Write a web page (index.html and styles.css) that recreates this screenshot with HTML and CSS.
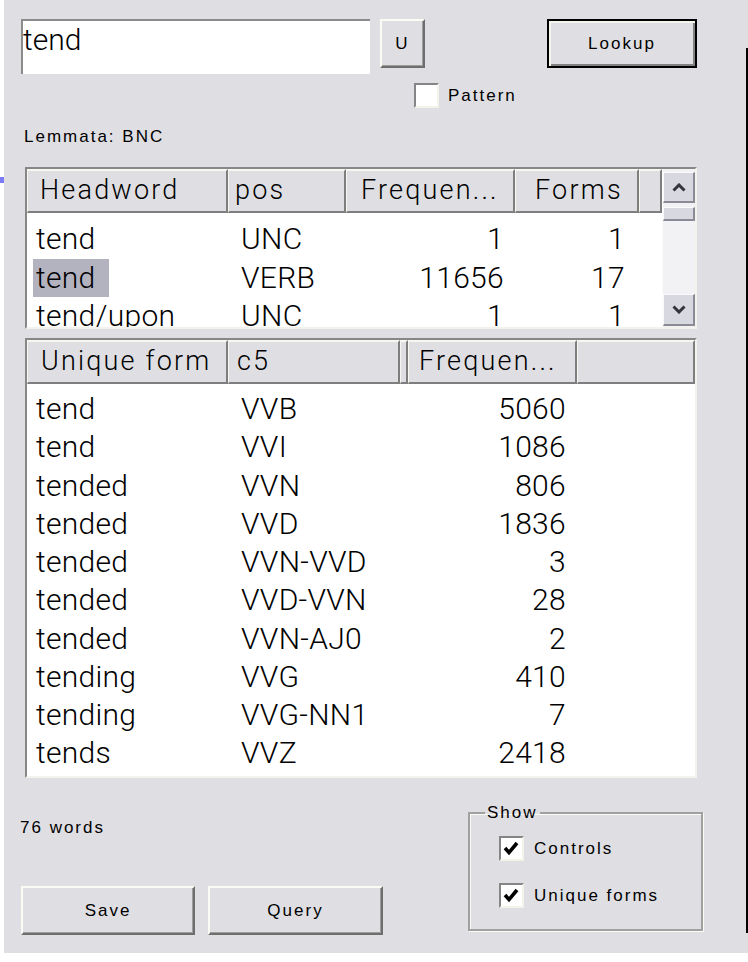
FILE: index.html
```html
<!DOCTYPE html>
<html>
<head>
<meta charset="utf-8">
<link rel="stylesheet" href="styles.css">
</head>
<body>
<div class="page">
  <div class="gutter"><div class="marker"></div></div>
  <div class="frame">
    <div class="main">
      <div class="toprow">
        <div class="textbox">tend</div>
        <div class="btn btn-u ui">U</div>
        <div class="btn btn-default btn-lookup ui">Lookup</div>
      </div>
      <div class="patternrow">
        <span class="checkbox"></span><span class="cblabel ui">Pattern</span>
      </div>
      <div class="lemmata ui">Lemmata: BNC</div>

      <div class="list list-upper">
        <div class="listpane">
          <div class="hdr cols-upper">
            <div class="hc hc-head">Headword</div>
            <div class="hc hc-pos">pos</div>
            <div class="hc hc-freq">Frequen...</div>
            <div class="hc hc-forms">Forms</div>
            <div class="hc"></div>
          </div>
          <div class="body body-upper">
            <div class="row cols-upper"><span class="c c1">tend</span><span class="c c2">UNC</span><span class="c num nf">1</span><span class="c num nfo">1</span><span></span></div>
            <div class="row cols-upper"><span class="c c1"><span class="sel">tend</span></span><span class="c c2">VERB</span><span class="c num nf">11656</span><span class="c num nfo">17</span><span></span></div>
            <div class="row cols-upper"><span class="c c1">tend/upon</span><span class="c c2">UNC</span><span class="c num nf">1</span><span class="c num nfo">1</span><span></span></div>
          </div>
        </div>
        <div class="scrollbar">
          <div class="sb-btn"><svg width="14" height="9" viewBox="0 0 14 9"><polyline points="1.5,7.5 7,2 12.5,7.5" fill="none" stroke="#34343f" stroke-width="3"/></svg></div>
          <div class="sb-thumb"></div>
          <div class="sb-track"></div>
          <div class="sb-btn"><svg width="14" height="9" viewBox="0 0 14 9"><polyline points="1.5,1.5 7,7 12.5,1.5" fill="none" stroke="#34343f" stroke-width="3"/></svg></div>
        </div>
      </div>

      <div class="list list-lower">
        <div class="listpane">
          <div class="hdr cols-lower">
            <div class="hc hc-uf">Unique form</div>
            <div class="hc hc-c5">c5</div>
            <div class="hc"></div>
            <div class="hc hc-lfreq">Frequen...</div>
            <div class="hc"></div>
          </div>
          <div class="body body-lower">
            <div class="row cols-lower"><span class="c c1">tend</span><span class="c c2">VVB</span><span></span><span class="c num nl">5060</span><span></span></div>
            <div class="row cols-lower"><span class="c c1">tend</span><span class="c c2">VVI</span><span></span><span class="c num nl">1086</span><span></span></div>
            <div class="row cols-lower"><span class="c c1">tended</span><span class="c c2">VVN</span><span></span><span class="c num nl">806</span><span></span></div>
            <div class="row cols-lower"><span class="c c1">tended</span><span class="c c2">VVD</span><span></span><span class="c num nl">1836</span><span></span></div>
            <div class="row cols-lower"><span class="c c1">tended</span><span class="c c2">VVN-VVD</span><span></span><span class="c num nl">3</span><span></span></div>
            <div class="row cols-lower"><span class="c c1">tended</span><span class="c c2">VVD-VVN</span><span></span><span class="c num nl">28</span><span></span></div>
            <div class="row cols-lower"><span class="c c1">tended</span><span class="c c2">VVN-AJ0</span><span></span><span class="c num nl">2</span><span></span></div>
            <div class="row cols-lower"><span class="c c1">tending</span><span class="c c2">VVG</span><span></span><span class="c num nl">410</span><span></span></div>
            <div class="row cols-lower"><span class="c c1">tending</span><span class="c c2">VVG-NN1</span><span></span><span class="c num nl">7</span><span></span></div>
            <div class="row cols-lower"><span class="c c1">tends</span><span class="c c2">VVZ</span><span></span><span class="c num nl">2418</span><span></span></div>
          </div>
        </div>
      </div>

      <div class="bottom">
        <div class="bottomleft">
          <div class="count ui">76 words</div>
          <div class="btnrow">
            <div class="btn btn-save ui">Save</div>
            <div class="btn btn-query ui">Query</div>
          </div>
        </div>
        <fieldset class="group">
          <legend class="ui">Show</legend>
          <div class="grow">
            <span class="checkbox"><svg width="21" height="21" viewBox="0 0 21 21"><polyline points="4,10 8,14.5 16,5" fill="none" stroke="#000" stroke-width="3.6"/></svg></span><span class="cblabel ui">Controls</span>
          </div>
          <div class="grow grow2">
            <span class="checkbox"><svg width="21" height="21" viewBox="0 0 21 21"><polyline points="4,10 8,14.5 16,5" fill="none" stroke="#000" stroke-width="3.6"/></svg></span><span class="cblabel ui">Unique forms</span>
          </div>
        </fieldset>
      </div>
    </div>
    <div class="edge"></div>
  </div>
</div>
</body>
</html>
```
FILE: styles.css
```css
* { box-sizing: border-box; }
html, body { margin: 0; padding: 0; }
body {
  background: #ffffff;
  font-family: "Liberation Sans", Arial, sans-serif;
  color: #000;
}
.page { display: flex; width: 748px; height: 962px; }
.gutter { width: 4px; flex: none; }
.marker { margin-top: 177px; height: 6px; background: #7b7bf5; }
.frame { display: flex; width: 744px; height: 953px; background: #dfdfe3; flex: none; }
.main { width: 742px; padding: 19px 0 0 17px; flex: none; }
.edge { width: 2px; margin-top: 48px; height: 885px; background: #000; flex: none; }

.ui { font-size: 17px; letter-spacing: 2px; line-height: 20px; }

/* top row */
.toprow { display: flex; align-items: flex-start; }
.textbox {
  width: 349px; height: 55px; background: #fff;
  border-top: 2px solid #8b8b8b; border-left: 2px solid #8b8b8b;
  font-family: Roboto, "Liberation Sans", sans-serif; font-weight: 300;
  font-size: 30px; line-height: 34px; padding-top: 2px;
}
.btn {
  display: flex; align-items: center; justify-content: center;
  background: #dfdfe3;
  border-style: solid; border-width: 2px;
  border-color: #fbfaf3 #6e6e6e #6e6e6e #fbfaf3;
  box-shadow: inset -1px -1px 0 #9d9d9d;
}
.btn-u { width: 45px; height: 49px; margin-left: 10px; }
.btn-default {
  border: 2px solid #000;
  box-shadow: inset 2px 2px 0 #f6f5ec, inset -2px -2px 0 #828282;
}
.btn-lookup { width: 150px; height: 49px; margin-left: 122px; }

.patternrow { display: flex; align-items: center; margin: 9px 0 0 393px; }
.checkbox {
  width: 25px; height: 25px; flex: none; background: #fff;
  border-style: solid; border-width: 2px;
  border-color: #858585 #f4f3ea #f4f3ea #858585;
  display: flex; align-items: center; justify-content: center;
}
.cblabel { margin-left: 9px; }
.lemmata { margin: 19px 0 0 3px; }

/* lists */
.list {
  display: flex; margin-left: 4px; width: 672px;
  border-style: solid; border-width: 2px;
  border-color: #878787 #f3f2ec #f3f2ec #878787;
  background: #fff; overflow: hidden;
}
.list-upper { margin-top: 20px; height: 162px; }
.list-lower { margin-top: 9px; height: 440px; }
.listpane { flex: 1; display: flex; flex-direction: column; overflow: hidden; }
.list-upper .listpane { width: 635px; flex: none; }

.cols-upper { display: grid; grid-template-columns: 201px 118px 169px 124px 23px; }
.cols-lower { display: grid; grid-template-columns: 201px 172px 8px 169px 118px; }

.hdr { height: 44px; flex: none; background: #dfdfe3; }
.hc {
  height: 44px; background: #dfdfe3;
  border-style: solid; border-width: 2px 2px 2px 1px;
  border-color: #f8f7ef #7e7e7e #7e7e7e #f8f7ef;
  font-family: Roboto, "Liberation Sans", sans-serif; font-weight: 300;
  font-size: 27px; letter-spacing: 2.2px; line-height: 38px;
  white-space: nowrap; overflow: hidden;
}
.hc-head { padding-left: 12px; }
.hc-pos { padding-left: 6px; }
.hc-freq { padding-left: 14px; }
.hc-forms { padding-left: 19px; }
.hc-uf { padding-left: 13px; }
.hc-c5 { padding-left: 8px; }
.hc-lfreq { padding-left: 10px; }

.body { flex: 1; overflow: hidden; }
.body-upper { padding-top: 7px; }
.body-lower { padding-top: 6px; }
.row {
  font-family: Roboto, "Liberation Sans", sans-serif; font-weight: 300;
  font-size: 30px; letter-spacing: 0.3px; white-space: nowrap;
}
.body-upper .row { height: 38.5px; line-height: 38.5px; }
.body-lower .row { height: 38.25px; line-height: 38.25px; }
.c1 { padding-left: 9px; }
.c2 { padding-left: 13px; }
.num { text-align: right; }
.nf { padding-right: 11px; }
.nfo { padding-right: 14px; }
.nl { padding-right: 11px; }
.sel {
  display: inline-block; background: #b3b3c0;
  width: 76px; margin-left: -3px; padding-left: 3px;
}

/* scrollbar */
.scrollbar {
  width: 33px; flex: none; background: #f2f2f5;
  display: flex; flex-direction: column;
  padding: 3px 0 1px 0;
  border-left: 1px solid #fbfbfb;
}
.sb-btn {
  height: 31px; flex: none; background: #d8d8e0;
  border-style: solid; border-width: 1px 2px 2px 1px;
  border-color: #fbfbfd #8b8b96 #8b8b96 #fbfbfd;
  display: flex; align-items: center; justify-content: center;
}
.sb-thumb {
  height: 14px; margin-top: 4px; flex: none; background: #d8d8e0;
  border-style: solid; border-width: 1px 2px 2px 1px;
  border-color: #fbfbfd #8b8b96 #8b8b96 #fbfbfd;
}
.sb-track { flex: 1; }
.scrollbar .sb-btn:last-child { height: 32px; }

/* bottom */
.bottom { display: flex; align-items: flex-start; }
.bottomleft { width: 362px; flex: none; }
.count { margin: 40px 0 0 -1px; }
.btnrow { display: flex; gap: 13px; margin-top: 48px; }
.btn-save { width: 174px; height: 49px; }
.btn-query { width: 175px; height: 49px; }

.group {
  margin: 25px 0 0 85px; width: 235px; min-width: 0;
  padding: 13px 0 21px 14px;
  border: 2px solid #a0a0a0;
  box-shadow: 1px 1px 0 #fbfbf6, inset 1px 1px 0 #fbfbf6;
}
.group legend { padding: 0 2px; margin-left: 1px; }
.grow { display: flex; align-items: center; margin-left: 15px; }
.grow2 { margin-top: 22px; }
.grow .cblabel { margin-left: 10px; }
```
